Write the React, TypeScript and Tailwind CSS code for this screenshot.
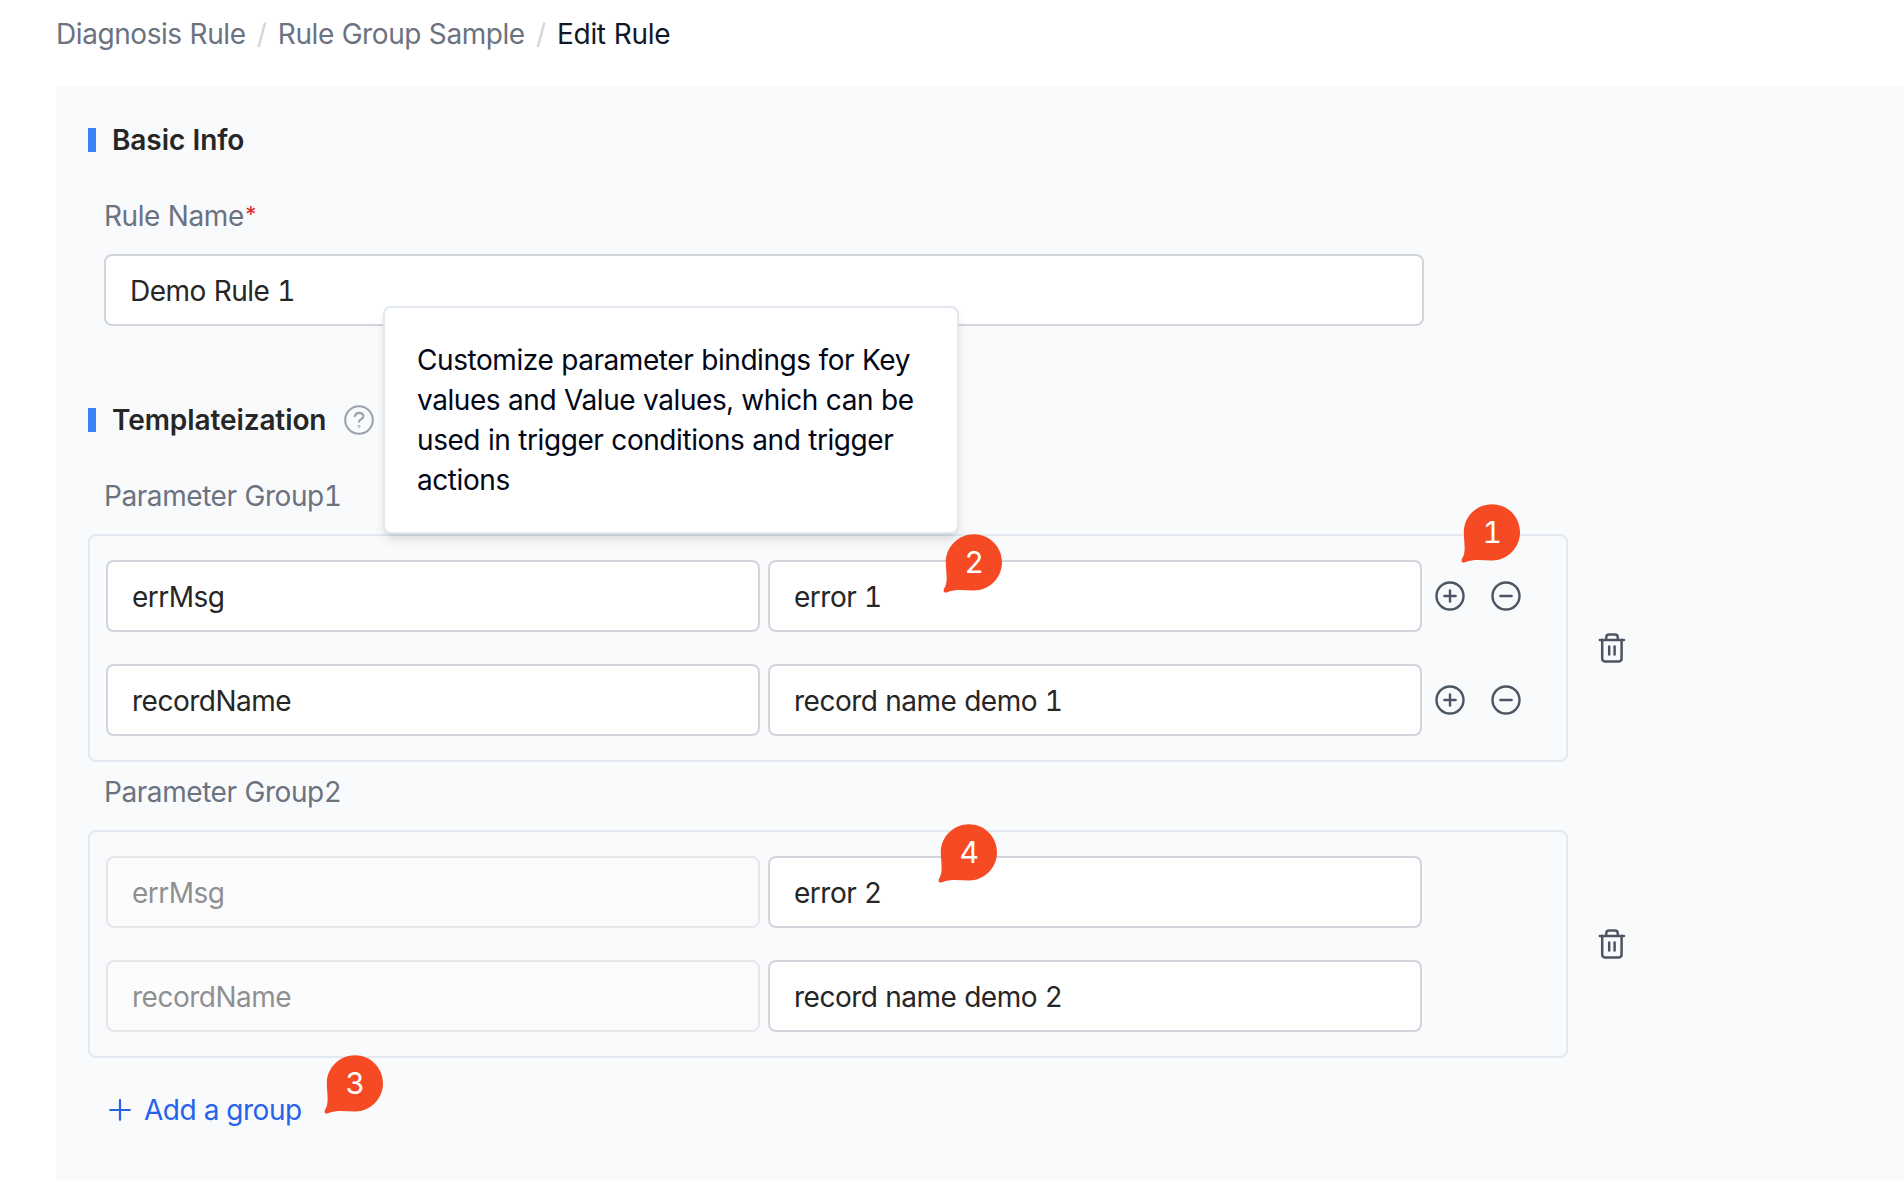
import React from "react";

type Row = { name: string; value: string };

function Badge({ n, className }: { n: number; className: string }) {
  return (
    <div className={`absolute z-20 h-[60px] w-[60px] ${className}`}>
      <svg viewBox="0 0 60 60" className="absolute inset-0 h-full w-full" fill="#f54a24">
        <path d="M31 0.2C46.5 0.2 59 12.7 59 28.2C59 43.8 46.4 56.4 31 56.4C21 56.4 12.5 55 4.6 58C1.8 59.6 -0.3 57.6 1 54.8C5.6 48 2.8 37.5 2.8 28.2C2.8 12.7 15.5 0.2 31 0.2Z" />
      </svg>
      <span className="absolute left-[3px] top-0 w-14 text-center text-[30px] leading-[56px] text-white">{n}</span>
    </div>
  );
}

function Section({ title, children }: { title: string; children?: React.ReactNode }) {
  return (
    <h2 className="flex h-10 items-center pl-8 font-semibold tracking-[-0.09px] text-[#262626] [word-spacing:0px]">
      <span className="mr-4 h-6 w-2 bg-[#3b82f6]" />
      {title}
      {children}
    </h2>
  );
}

function Field({ value, disabled, className }: { value: string; disabled?: boolean; className: string }) {
  return (
    <input
      defaultValue={value}
      disabled={disabled}
      className={`block h-[72px] rounded-lg border-2 border-[#d1d5db] bg-white px-6 pt-[2px] text-[#262626] tracking-[-0.5px] [word-spacing:0.8px] disabled:opacity-50 ${className}`}
    />
  );
}

function CircleIcon({ plus }: { plus?: boolean }) {
  return (
    <svg viewBox="0 0 30 30" className="h-[30px] w-[30px]" fill="none" stroke="#4b5563" strokeWidth="2.4" strokeLinecap="round">
      <circle cx="15" cy="15" r="13.5" />
      <path d="M9.4 15H20.6" />
      {plus && <path d="M15 9.4V20.6" />}
    </svg>
  );
}

function TrashIcon() {
  return (
    <svg viewBox="0 0 28 30" className="h-[30px] w-7" fill="none" stroke="#4b5563" strokeWidth="2.5" strokeLinecap="round" strokeLinejoin="round">
      <path d="M1.8 7H26" />
      <path d="M8.2 6.6V4.6Q8.2 1.6 11.2 1.6H16.8Q19.8 1.6 19.8 4.6V6.6" />
      <path d="M4.2 7V25.6Q4.2 28.4 7 28.4H20.8Q23.6 28.4 23.6 25.6V7" />
      <path d="M11.2 13.4V21.6M16.6 13.4V21.6" />
    </svg>
  );
}

function Group({ label, rows, inherited }: { label: string; rows: Row[]; inherited?: boolean }) {
  return (
    <div className="pt-[10px]">
      <div className="pl-12 text-[#6b7280]">{label}</div>
      <div className="mt-[18px] ml-8 flex items-center">
        <div className="flex h-[228px] w-[1480px] flex-col gap-8 rounded-lg border-2 border-[#e2e8f0] px-4 py-6">
          {rows.map((row) => (
            <div key={row.name} className="flex items-center">
              <Field value={row.name} disabled={inherited} className="mr-2 w-[654px]" />
              <Field value={row.value} className="w-[654px]" />
              {!inherited && (
                <div className="ml-[13px] flex gap-[26px]">
                  <CircleIcon plus />
                  <CircleIcon />
                </div>
              )}
            </div>
          ))}
        </div>
        <div className="ml-[30px]">
          <TrashIcon />
        </div>
      </div>
    </div>
  );
}

export default function App() {
  return (
    <div className="relative flex h-[1180px] w-[1904px] flex-col overflow-hidden bg-white pl-14 font-['Inter',sans-serif] text-[28px] leading-10 tracking-[-0.43px] tabular-nums [word-spacing:0.8px]">
      <nav className="flex h-[86px] shrink-0 items-start gap-[11.3px] pt-[14px] text-[#6b7280]">
        <span>Diagnosis Rule</span>
        <span className="text-[#d1d5db]">/</span>
        <span>Rule Group Sample</span>
        <span className="text-[#d1d5db]">/</span>
        <span className="text-[#111827] tracking-[-0.3px]">Edit Rule</span>
      </nav>
      <main className="grow bg-[#f9fafc] pt-[34px]">
        <Section title="Basic Info" />
        <div className="mt-9 flex pl-12 text-[#6b7280]">
          Rule Name<span className="text-[22px] leading-9 text-[#dc2626]">*</span>
        </div>
        <Field value="Demo Rule 1" className="mt-[18px] ml-12 w-[1320px]" />
        <div className="mt-[74px]">
          <Section title="Templateization">
            <svg viewBox="0 0 30 30" className="ml-[18px] h-[30px] w-[30px]" fill="none" stroke="#9ca3af" strokeWidth="2.1" strokeLinecap="round">
              <circle cx="15" cy="15" r="13.8" />
              <path d="M10.8 11.2C11.4 9 13 7.9 15.1 7.9C17.6 7.9 19.3 9.4 19.3 11.5C19.3 14.2 15 14.3 15 16.8" />
              <circle cx="15" cy="21.4" r="0.4" />
            </svg>
          </Section>
        </div>
        <div className="mt-[26px]">
          <Group
            label="Parameter Group1"
            rows={[
              { name: "errMsg", value: "error 1" },
              { name: "recordName", value: "record name demo 1" },
            ]}
          />
          <Group
            label="Parameter Group2"
            inherited
            rows={[
              { name: "errMsg", value: "error 2" },
              { name: "recordName", value: "record name demo 2" },
            ]}
          />
        </div>
        <button className="mt-8 ml-[53px] flex items-center gap-[13px] text-[#2563eb] tracking-[-0.5px] [word-spacing:0.5px]">
          <svg viewBox="0 0 22 22" className="h-[22px] w-[22px]" stroke="currentColor" strokeWidth="2.2" strokeLinecap="round">
            <path d="M1.2 11H20.8M11 1.2V20.8" />
          </svg>
          Add a group
        </button>
      </main>
      <div role="tooltip" className="absolute left-[383px] top-[306px] z-10 h-[228px] w-[576px] rounded-lg border-2 border-[#e2e8f0] bg-white p-8 text-[#020617] shadow-[0_8px_12px_-2px_rgba(0,0,0,0.1),0_4px_8px_-4px_rgba(0,0,0,0.1)]">
        Customize parameter bindings for Key values and Value values, which can be used in trigger conditions and trigger actions
      </div>
      <Badge n={1} className="left-[1461px] top-[504px]" />
      <Badge n={2} className="left-[943px] top-[534px]" />
      <Badge n={3} className="left-[324px] top-[1055px]" />
      <Badge n={4} className="left-[938px] top-[824px]" />
    </div>
  );
}
